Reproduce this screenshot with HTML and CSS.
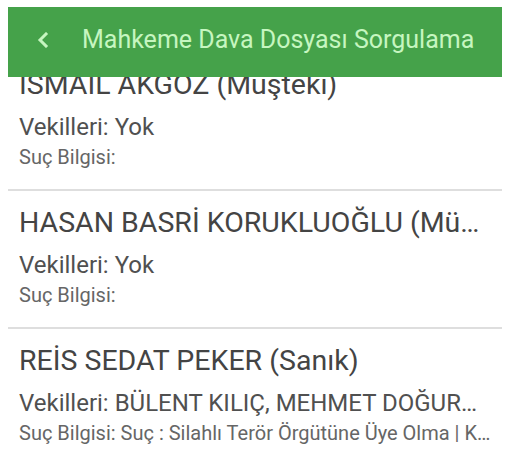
FILE: index.html
```html
<!DOCTYPE html>
<html lang="tr">
<head>
<meta charset="utf-8">
<title>Mahkeme Dava Dosyası Sorgulama</title>
<link rel="stylesheet" href="styles.css">
</head>
<body>
<div class="screen">
  <header class="appbar">
    <svg class="back" width="14" height="16" viewBox="0 0 14 16" aria-hidden="true">
      <path d="M10 2 L4 8 L10 14" fill="none" stroke="currentColor" stroke-width="3" stroke-linecap="square" stroke-linejoin="miter"/>
    </svg>
    <h1 class="appbar-title">Mahkeme Dava Dosyası Sorgulama</h1>
  </header>
  <ul class="list">
    <li class="item">
      <div class="name">İSMAİL AKGÖZ (Müşteki)</div>
      <div class="lawyers">Vekilleri: Yok</div>
      <div class="crime">Suç Bilgisi:</div>
    </li>
    <li class="item">
      <div class="name">HASAN BASRİ KORUKLUOĞLU (Müşteki)</div>
      <div class="lawyers">Vekilleri: Yok</div>
      <div class="crime">Suç Bilgisi:</div>
    </li>
    <li class="item">
      <div class="name">REİS SEDAT PEKER (Sanık)</div>
      <div class="lawyers">Vekilleri: BÜLENT KILIÇ, MEHMET DOĞURGA</div>
      <div class="crime">Suç Bilgisi: Suç : Silahlı Terör Örgütüne Üye Olma | Kasten Yaralama</div>
    </li>
  </ul>
</div>
</body>
</html>
```

FILE: styles.css
```css
* { box-sizing: border-box; }
html, body {
  margin: 0;
  padding: 0;
  background: #ffffff;
}
body {
  font-family: Roboto, "Noto Sans", "Liberation Sans", sans-serif;
  width: 508px;
  height: 473px;
  overflow: hidden;
}
.screen {
  position: relative;
  margin: 7px 6px 0 8px;
  height: 466px;
  overflow: hidden;
}
.appbar {
  position: absolute;
  top: 0;
  left: 0;
  right: 0;
  height: 70px;
  background: #45a24a;
  color: #c6f6c0;
  display: flex;
  align-items: center;
  z-index: 2;
}
.back {
  margin-left: 28px;
  margin-top: -4px;
  flex: none;
}
.appbar-title {
  margin: -5px 0 0 32px;
  font-size: 25px;
  font-weight: 400;
  line-height: 30px;
  white-space: nowrap;
}
.list {
  list-style: none;
  margin: 0;
  padding: 46px 0 0 0;
}
.item {
  padding: 15px 15px 19px 11px;
  border-bottom: 2px solid #dedede;
}
.item:last-child {
  border-bottom: none;
}
.name, .lawyers, .crime {
  white-space: nowrap;
  overflow: hidden;
  text-overflow: ellipsis;
}
.name {
  font-size: 28.5px;
  line-height: 34px;
  color: #444444;
}
.lawyers {
  font-size: 24px;
  line-height: 30px;
  margin-top: 10px;
  color: #505050;
}
.crime {
  font-size: 20px;
  line-height: 26px;
  margin-top: 2px;
  margin-right: -6px;
  color: #666666;
}
```
